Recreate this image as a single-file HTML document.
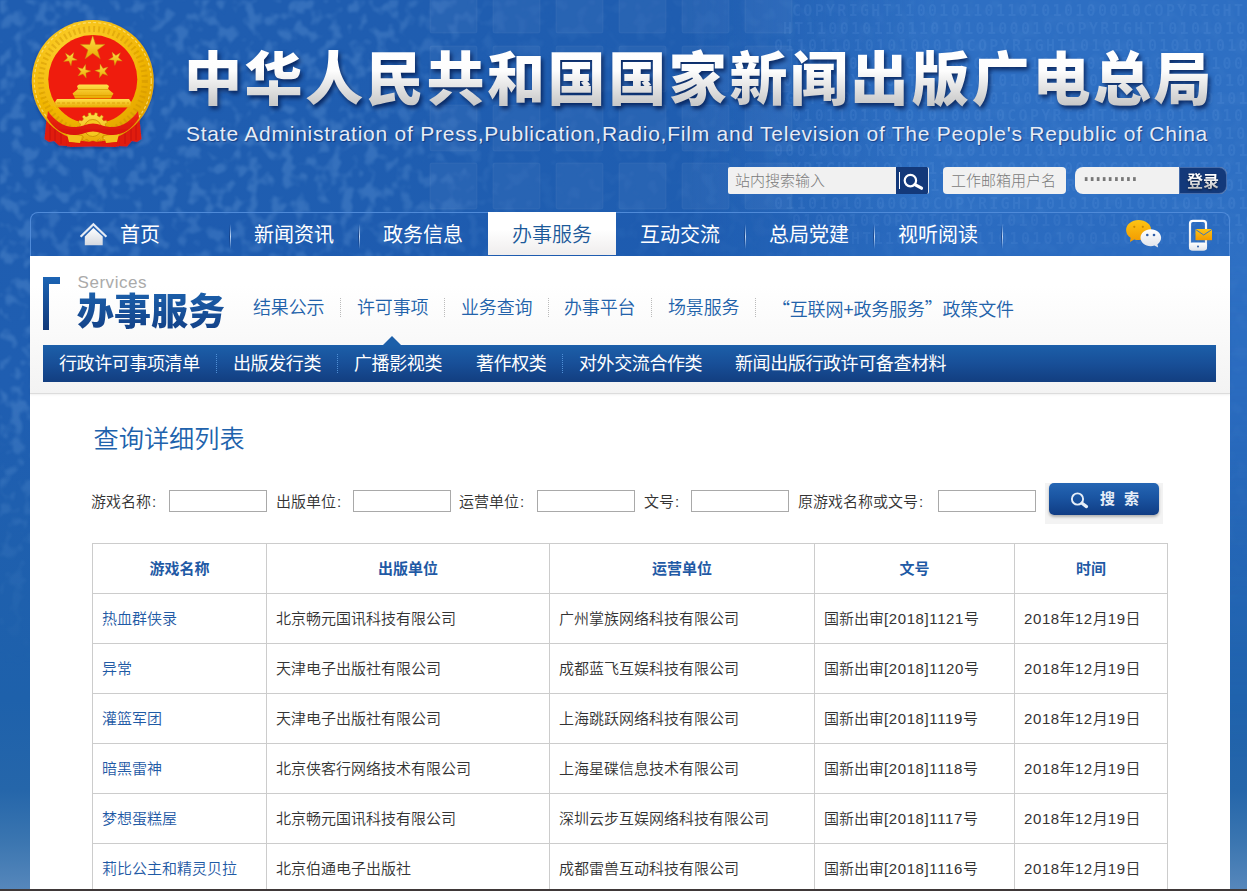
<!DOCTYPE html>
<html lang="zh-CN">
<head>
<meta charset="utf-8">
<title>查询详细列表 - 国家新闻出版广电总局</title>
<style>
*{box-sizing:border-box;margin:0;padding:0}
html,body{width:1247px;height:891px;overflow:hidden}
body{position:relative;font-family:"Liberation Sans","Noto Sans CJK SC DemiLight","Noto Sans CJK SC",sans-serif;background:#2062b6;color:#333}
.abs{position:absolute}
#bg{position:absolute;left:0;top:0;width:1247px;height:891px;background:linear-gradient(180deg,#1f5db0 0,#1f5eb1 400px,#1e61ab 700px,#2566aa 790px,#3a75b0 840px,#5687bb 889px)}
#bgr{position:absolute;left:0;top:0;width:1247px;height:891px;background:linear-gradient(90deg,rgba(70,135,215,0) 0,rgba(70,135,215,0) 55%,rgba(70,140,225,.4) 75%,rgba(70,140,225,.4) 100%);-webkit-mask-image:linear-gradient(180deg,#000 0,#000 260px,rgba(0,0,0,.35) 560px,transparent 760px);mask-image:linear-gradient(180deg,#000 0,#000 260px,rgba(0,0,0,.35) 560px,transparent 760px)}
#bottomline{position:absolute;left:0;top:889px;width:1247px;height:2px;background:#3f3838}
/* header */
#title{position:absolute;left:184px;top:33px;font-size:58px;font-weight:900;letter-spacing:2.6px;white-space:nowrap;color:#eee;line-height:84px;font-family:"Noto Sans CJK SC",sans-serif;
 background:linear-gradient(180deg,#fff 20%,#fdfdfd 45%,#c9c9c9 85%);-webkit-background-clip:text;background-clip:text;-webkit-text-fill-color:transparent;filter:drop-shadow(2px 3px 2px rgba(0,20,70,.75))}
#sub{position:absolute;left:186px;top:121px;font-size:21px;line-height:26px;color:#e6ecf6;white-space:nowrap;letter-spacing:.76px;text-shadow:1px 1px 1px rgba(0,20,80,.5)}
.inp{position:absolute;top:167px;height:27px;background:#f1f1f1;border-radius:4px;font-size:15px;line-height:27px;color:#7a7a7a;padding-left:8px;white-space:nowrap;letter-spacing:0;font-family:"Liberation Sans","Noto Sans CJK SC Light","Noto Sans CJK SC DemiLight","Noto Sans CJK SC",sans-serif;font-weight:300}
#pw{position:absolute;left:8.5px;top:-1.5px;font-family:"Liberation Sans",sans-serif;font-size:19px;font-weight:700;letter-spacing:-.3px;color:#777;line-height:27px;transform:scaleY(1.35);transform-origin:0 50%}
#lg{background:linear-gradient(180deg,#fff 25%,#c4c4c4 85%);-webkit-background-clip:text;background-clip:text;-webkit-text-fill-color:transparent;filter:drop-shadow(0 1px 1px rgba(0,0,0,.5))}
.btn{position:absolute;top:167px;height:27px;background:#13397a;color:#fff}
/* nav */
#nav{position:absolute;left:30px;top:212px;width:1200px;height:44px;background:rgba(25,85,170,.12);border:1px solid #4f8ad8;border-bottom:none;border-radius:8px 8px 0 0}
.ni{position:absolute;top:213px;height:44px;line-height:44px;font-size:20px;color:#fff;white-space:nowrap;font-family:"Liberation Sans","Noto Sans CJK SC",sans-serif}
.ns{position:absolute;top:224px;width:2px;height:25px;background:linear-gradient(180deg,rgba(10,40,100,0),rgba(10,40,100,.55) 50%,rgba(10,40,100,0)) left/1px 100% no-repeat,linear-gradient(180deg,rgba(200,222,250,0),rgba(200,222,250,.95) 50%,rgba(200,222,250,0)) right/1px 100% no-repeat}
#act{position:absolute;left:488px;top:212px;width:128px;height:43px;background:linear-gradient(180deg,#fff 0,#fff 40%,#efeded 100%)}
/* main */
#main{position:absolute;left:30px;top:256px;width:1200px;height:633px;background:#fff}
#sechead{position:absolute;left:30px;top:256px;width:1200px;height:138px;background:linear-gradient(180deg,#fff 0,#fff 30px,#f3f3f3 137px);border-bottom:1px solid #dcdcdc;box-shadow:0 1px 2px rgba(0,0,0,.06)}
#brk{position:absolute;left:43px;top:277px;width:17px;height:53px}
#svc{position:absolute;left:77.5px;top:272px;font-size:17px;line-height:22px;color:#aaa;letter-spacing:.55px}
#svct{position:absolute;left:77px;top:284.5px;font-size:37px;line-height:48px;font-weight:900;color:#1b4f96;white-space:nowrap;font-family:"Noto Sans CJK SC",sans-serif;
 background:linear-gradient(180deg,#1d64b0,#123f85);-webkit-background-clip:text;background-clip:text;-webkit-text-fill-color:transparent}
.sn{position:absolute;top:295px;font-size:18px;line-height:26px;color:#2262aa;white-space:nowrap;letter-spacing:-.15px}
.sd{position:absolute;top:298px;width:0;height:19px;border-left:1px dotted #bbb}
#bar{position:absolute;left:43px;top:345px;width:1173px;height:37px;background:linear-gradient(180deg,#1c5fa9 0,#184f98 50%,#123e80 100%)}
.bi{position:absolute;top:346px;font-size:18px;line-height:37px;color:#fff;white-space:nowrap;letter-spacing:-.4px;font-family:"Liberation Sans","Noto Sans CJK SC",sans-serif}
.bd{position:absolute;top:354px;width:0;height:19px;border-left:1px dotted #4f8fd6}
#tri{position:absolute;left:383px;top:336px;width:0;height:0;border-left:9.5px solid transparent;border-right:9.5px solid transparent;border-bottom:9.5px solid #1c5fa9}
#h1{position:absolute;left:93.5px;top:420.5px;font-size:25.2px;line-height:36px;color:#2062ac;font-weight:400;white-space:nowrap}
.fl{position:absolute;top:491px;font-size:15px;line-height:22px;color:#333;white-space:nowrap}
.fl i{font-style:normal;margin-left:1px}
.fi{position:absolute;top:490px;width:98px;height:22px;border:1px solid #a9a9a9;background:#fff}
#sbg{position:absolute;left:1045px;top:483px;width:118px;height:41px;background:#f3f3f3}
#sbtn{position:absolute;left:1049px;top:483px;width:110px;height:32px;border-radius:5px;background:linear-gradient(180deg,#2566b4 0,#1a55a2 45%,#103c84 100%);color:#e6eef8;font-size:15px;font-weight:700;line-height:32px;white-space:nowrap;box-shadow:0 2px 3px rgba(0,0,0,.28);font-family:"Liberation Sans","Noto Sans CJK SC",sans-serif}
table{position:absolute;left:92px;top:543px;border-collapse:collapse;table-layout:fixed;width:1075px;font-size:15px}
td,th{border:1px solid #ccc;height:50px;padding:0 0 2px 9px;text-align:left;font-weight:400;color:#333;white-space:nowrap;overflow:hidden}
th{text-align:center;padding:0 0 2px 0;font-weight:700;font-family:"Liberation Sans","Noto Sans CJK SC",sans-serif;color:#1f5aa5}
td.a{color:#1f5aa5}
.n{letter-spacing:.6px}
.q{font-family:"Noto Sans CJK SC DemiLight","Noto Sans CJK SC",sans-serif}
</style>
</head>
<body>
<div id="bg"></div><div id="bgr"></div>
<svg id="tex" style="position:absolute;left:0;top:0" width="1247" height="891" viewBox="0 0 1247 891">
<defs>
<filter id="nz" x="0" y="0" width="100%" height="100%"><feTurbulence type="fractalNoise" baseFrequency="0.085 0.075" numOctaves="2" seed="11"/><feColorMatrix type="matrix" values="0 0 0 0 .38  0 0 0 0 .64  0 0 0 0 .96  5 0 0 0 -2.4"/><feGaussianBlur stdDeviation=".9"/></filter>
<linearGradient id="fadeL" x1="0" y1="0" x2="1" y2="0"><stop offset="0" stop-color="#fff" stop-opacity="1"/><stop offset=".3" stop-color="#fff" stop-opacity="1"/><stop offset=".42" stop-color="#fff" stop-opacity=".25"/><stop offset="1" stop-color="#fff" stop-opacity=".2"/></linearGradient>
<linearGradient id="fadeV" x1="0" y1="0" x2="0" y2="1"><stop offset="0" stop-color="#fff"/><stop offset=".45" stop-color="#fff"/><stop offset=".75" stop-color="#000"/></linearGradient>
<mask id="mk"><rect width="1247" height="891" fill="url(#fadeL)"/></mask>
<mask id="mv"><rect width="1247" height="891" fill="url(#fadeV)"/></mask>
</defs>
<g mask="url(#mv)"><g mask="url(#mk)"><rect width="1247" height="891" filter="url(#nz)" opacity=".17"/></g></g>
<g fill="#fff" fill-opacity=".045" stroke="#fff" stroke-opacity=".05" stroke-width="1"><rect x="430" y="-13" width="47" height="46" rx="2"/><rect x="493" y="-13" width="47" height="46" rx="2"/><rect x="556" y="-13" width="47" height="46" rx="2"/><rect x="619" y="-13" width="47" height="46" rx="2"/><rect x="682" y="-13" width="47" height="46" rx="2"/><rect x="745" y="-13" width="47" height="46" rx="2"/><rect x="430" y="46" width="47" height="46" rx="2"/><rect x="493" y="46" width="47" height="46" rx="2"/><rect x="556" y="46" width="47" height="46" rx="2"/><rect x="619" y="46" width="47" height="46" rx="2"/><rect x="682" y="46" width="47" height="46" rx="2"/><rect x="745" y="46" width="47" height="46" rx="2"/><rect x="430" y="105" width="47" height="46" rx="2"/><rect x="493" y="105" width="47" height="46" rx="2"/><rect x="556" y="105" width="47" height="46" rx="2"/><rect x="619" y="105" width="47" height="46" rx="2"/><rect x="682" y="105" width="47" height="46" rx="2"/><rect x="745" y="105" width="47" height="46" rx="2"/><rect x="430" y="163" width="47" height="46" rx="2"/><rect x="493" y="163" width="47" height="46" rx="2"/><rect x="556" y="163" width="47" height="46" rx="2"/><rect x="619" y="163" width="47" height="46" rx="2"/><rect x="682" y="163" width="47" height="46" rx="2"/><rect x="745" y="163" width="47" height="46" rx="2"/></g>
<g font-family="'DejaVu Sans Mono','Liberation Mono',monospace" font-size="15" font-weight="bold" letter-spacing="2.3" fill="#9cc4ff" fill-opacity=".09" style="filter:blur(.5px)"><text x="792" y="16">COPYRIGHT1100101101101010100010COPYRIGHT101010</text><text x="783" y="33.5">HT1100101101101010100010COPYRIGHT1010101010101</text><text x="774" y="51.0">01101101010100010COPYRIGHT10101010101010101010</text><text x="792" y="68.5">1010100010COPYRIGHT101010101010101010100101010</text><text x="783" y="86.0">010COPYRIGHT1010101010101010101001010101010101</text><text x="774" y="103.5">IGHT1100101101101010100010COPYRIGHT10101010101</text><text x="792" y="121.0">0101101101010100010COPYRIGHT101010101010101010</text><text x="783" y="138.5">101010100010COPYRIGHT1010101010101010101001010</text><text x="774" y="156.0">00010COPYRIGHT10101010101010101010010101010101</text><text x="792" y="173.5">YRIGHT1100101101101010100010COPYRIGHT101010101</text><text x="783" y="191.0">100101101101010100010COPYRIGHT1010101010101010</text><text x="774" y="208.5">01101010100010COPYRIGHT10101010101010101010010</text><text x="792" y="226.0">0100010COPYRIGHT101010101010101010100101010101</text><text x="783" y="243.5">OPYRIGHT1100101101101010100010COPYRIGHT1010101</text></g>
</svg>
<svg id="emblem" style="position:absolute;left:20px;top:10px" width="150" height="150" viewBox="0 0 150 150">
<defs>
<radialGradient id="gld" cx="0.4" cy="0.3" r="0.8"><stop offset="0" stop-color="#ffd83a"/><stop offset="0.6" stop-color="#f2b705"/><stop offset="1" stop-color="#d99a00"/></radialGradient>
<linearGradient id="gl2" x1="0" y1="0" x2="0" y2="1"><stop offset="0" stop-color="#ffe04a"/><stop offset="1" stop-color="#e8a800"/></linearGradient>
<linearGradient id="rib" x1="0" y1="0" x2="0" y2="1"><stop offset="0" stop-color="#f02a14"/><stop offset="1" stop-color="#d81408"/></linearGradient>
<filter id="esh" x="-10%" y="-10%" width="120%" height="125%"><feDropShadow dx="0" dy="1.5" stdDeviation="1.5" flood-color="#0a2a66" flood-opacity=".55"/></filter>
</defs>
<g filter="url(#esh)">
<path d="M27,104 L24.5,129 L29,132 L34,131 L39,135.5 L47,136 L48,116 Z" fill="#e01a0c"/>
<path d="M119,104 L121.5,129 L117,132 L112,131 L107,136.5 L99,136 L98,116 Z" fill="#e01a0c"/>
<path d="M46,112 L100,112 L99,136.5 L47,136.5 Z" fill="#e01a0c"/>
<path d="M30,112 L30,130 M35,116 L35,131 M41,119 L41,134 M116,112 L116,130 M111,116 L111,131 M105,119 L105,134" stroke="#b80f06" stroke-width="1" fill="none" opacity=".6"/>
<circle cx="72.8" cy="71" r="61" fill="url(#gld)"/>
<circle cx="72.8" cy="71" r="58.5" fill="none" stroke="#fbe27a" stroke-width="1.2" stroke-dasharray="3 2.2" opacity=".8"/>
<circle cx="72.8" cy="71" r="52" fill="none" stroke="#c98c00" stroke-width="6" stroke-dasharray="2 3" opacity=".4"/>
<circle cx="72.8" cy="69.5" r="44.5" fill="#ef1c0c"/>
<polygon points="72.7,25.6 75.6,34.4 84.9,34.4 77.4,39.9 80.2,48.8 72.7,43.3 65.2,48.8 68.0,39.9 60.5,34.4 69.8,34.4" fill="url(#gl2)" stroke="#c8860a" stroke-width=".5"/>
<polygon points="53.8,42.4 52.7,47.5 57.2,50.1 52.0,50.6 51.0,55.8 48.8,51.0 43.6,51.5 47.5,48.0 45.4,43.2 49.9,45.9" fill="url(#gl2)" stroke="#c8860a" stroke-width=".4"/>
<polygon points="92.0,42.0 95.9,45.5 100.4,42.8 98.3,47.6 102.2,51.1 97.0,50.6 94.8,55.4 93.8,50.2 88.6,49.7 93.1,47.1" fill="url(#gl2)" stroke="#c8860a" stroke-width=".4"/>
<polygon points="65.5,54.4 65.7,59.7 70.8,61.0 65.9,62.9 66.2,68.1 62.9,64.1 58.0,65.9 60.9,61.5 57.6,57.5 62.6,58.8" fill="url(#gl2)" stroke="#c8860a" stroke-width=".4"/>
<polygon points="80.1,54.0 83.0,58.4 88.0,57.1 84.7,61.1 87.6,65.5 82.7,63.7 79.4,67.7 79.7,62.5 74.8,60.6 79.9,59.3" fill="url(#gl2)" stroke="#c8860a" stroke-width=".4"/>
<path d="M57,76 L59,74.5 L87,74.5 L89,76 L88,79 L93.5,83.5 L92,86 L91,88.5 L55,88.5 L54,86 L52.5,83.5 L58,79 Z" fill="url(#gl2)"/>
<path d="M37,89 L109,89 L111,92 L110,97.5 L36,97.5 L35,92 Z" fill="url(#gl2)"/>
<path d="M54,85.5 L92,85.5" stroke="#d99a00" stroke-width=".8" fill="none"/>
<path d="M58,79.5 L88,79.5" stroke="#d99a00" stroke-width=".8" fill="none"/>
<path d="M37,93 L109,93" stroke="#d99a00" stroke-width=".8" stroke-dasharray="3 2" fill="none"/>
<polygon points="85.7,116.4 88.2,116.7 88.2,119.3 85.7,119.6 85.1,122.1 87.3,123.6 86.2,125.8 83.7,125.1 82.1,127.1 83.4,129.3 81.5,130.9 79.6,129.1 77.3,130.2 77.5,132.8 75.0,133.3 74.1,130.9 71.5,130.9 70.6,133.3 68.1,132.8 68.3,130.2 66.0,129.1 64.1,130.9 62.2,129.3 63.5,127.1 61.9,125.1 59.4,125.8 58.3,123.6 60.5,122.1 59.9,119.6 57.4,119.3 57.4,116.7 59.9,116.4 60.5,113.9 58.3,112.4 59.4,110.2 61.9,110.9 63.5,108.9 62.2,106.7 64.1,105.1 66.0,106.9 68.3,105.8 68.1,103.2 70.6,102.7 71.5,105.1 74.1,105.1 75.0,102.7 77.5,103.2 77.3,105.8 79.6,106.9 81.5,105.1 83.4,106.7 82.1,108.9 83.7,110.9 86.2,110.2 87.3,112.4 85.1,113.9" fill="url(#gl2)" stroke="#c08000" stroke-width=".5"/>
<circle cx="72.8" cy="118" r="8.5" fill="#f6c820" stroke="#c98c00" stroke-width=".8"/>
<path d="M47,124 L62,126 L60,133 L49,132 Z M99,124 L84,126 L86,133 L97,132 Z" fill="#f4c21a"/>
<path d="M28,101 C34,110 44,118 56,117 C63,116.5 67,113.5 73,113.5 C79,113.500 83,116.500 90,117 C102,118 112,110 118,101 L119,108 C112,119 102,126 90,125 C83,124.500 79,121.500 73,121.500 C67,121.500 63,124.500 56,125 C44,126 34,119 27,108 Z" fill="url(#rib)"/>
<path d="M48,132 L60,133.500 L72.800,131 L86,133.500 L98,132 L96,137 L72.800,136 L50,137 Z" fill="#e01a0c"/>
</g>
</svg>
<div id="title">中华人民共和国国家新闻出版广电总局</div>
<div id="sub">State Administration of Press,Publication,Radio,Film and Television of The People's Republic of China</div>

<div class="inp" style="left:728px;width:168px;border-radius:2px 0 0 2px;padding-left:7px">站内搜索输入</div>
<div class="btn" style="left:896px;width:33px;border-right:1px solid #dfe6f0;border-radius:0 2px 2px 0"><svg width="33" height="27" viewBox="0 0 33 27" style="display:block"><line x1="3.5" y1="5" x2="3.5" y2="22" stroke="#fff" stroke-width="1"/><circle cx="14.4" cy="13.6" r="5.7" fill="none" stroke="#fff" stroke-width="2.2"/><line x1="19" y1="17.6" x2="25.500" y2="21.200" stroke="#fff" stroke-width="3.2" stroke-linecap="round"/></svg></div>
<div class="inp" style="left:943px;width:123px">工作邮箱用户名</div>
<div class="inp" style="left:1075px;width:152px;border-radius:8px"><span id="pw">·········</span></div>
<div class="btn" style="left:1179px;width:48px;border-radius:0 8px 8px 0;font-size:16px;font-weight:700;line-height:29px;text-align:center;font-family:'Liberation Sans','Noto Sans CJK SC',sans-serif;box-shadow:inset 0 0 0 1px rgba(110,150,210,.55)"><span id="lg">登录</span></div>

<div id="nav"></div>
<div id="act"></div>
<svg style="position:absolute;left:78px;top:220px" width="32" height="28" viewBox="0 0 32 28">
<defs><linearGradient id="hg" x1="0" y1="0" x2="0" y2="1"><stop offset="0" stop-color="#ffffff"/><stop offset="1" stop-color="#d4d8e0"/></linearGradient></defs>
<path d="M2.6,16.8 L15.4,4.2 L28.4,16.8" fill="none" stroke="#e6ebf4" stroke-width="2.2" stroke-linejoin="miter"/>
<path d="M6.8,16.6 L15.4,8 L24.7,16.600 L24.7,25.3 L6.8,25.3 Z" fill="url(#hg)"/>
</svg>
<div class="ni" style="left:120px">首页</div>
<div class="ni" style="left:254px">新闻资讯</div>
<div class="ni" style="left:383px">政务信息</div>
<div class="ni" style="left:512px;color:#1c5a9a;font-family:'Liberation Sans','Noto Sans CJK SC DemiLight','Noto Sans CJK SC',sans-serif">办事服务</div>
<div class="ni" style="left:640px">互动交流</div>
<div class="ni" style="left:769px">总局党建</div>
<div class="ni" style="left:898px">视听阅读</div>
<div class="ns" style="left:229px"></div>
<div class="ns" style="left:358px"></div>
<div class="ns" style="left:744px"></div>
<div class="ns" style="left:873px"></div>
<div class="ns" style="left:1001px"></div>

<svg style="position:absolute;left:1120px;top:216px" width="100" height="38" viewBox="0 0 100 38">
<defs>
<linearGradient id="og" x1="0" y1="0" x2="0" y2="1"><stop offset="0" stop-color="#fdc414"/><stop offset="1" stop-color="#f29a00"/></linearGradient>
<linearGradient id="wg" x1="0" y1="0" x2="0" y2="1"><stop offset="0" stop-color="#ffffff"/><stop offset="1" stop-color="#dfe3ea"/></linearGradient>
</defs>
<path d="M18.6,4 C25.6,4 31.2,8.4 31.2,14 C31.2,19.6 25.6,24 18.6,24 C17,24 15.6,23.8 14.2,23.4 L10,26 L10.6,21.8 C7.8,20 6.1,17.2 6.1,14 C6.1,8.4 11.7,4 18.6,4 Z" fill="url(#og)"/>
<circle cx="14.3" cy="10.8" r="1.1" fill="#c98a00"/><circle cx="22.8" cy="10.8" r="1.1" fill="#c98a00"/>
<path d="M30.8,13.2 C36.5,13.2 41.1,17 41.1,21.7 C41.1,24.3 39.7,26.6 37.5,28.2 L38.1,31.6 L34.4,29.6 C33.300,30 32.100,30.200 30.800,30.200 C25.100,30.200 20.500,26.400 20.500,21.700 C20.500,17 25.100,13.200 30.800,13.200 Z" fill="url(#wg)"/>
<circle cx="27.3" cy="19" r="1.3" fill="#2f5ea8"/><circle cx="34" cy="19" r="1.3" fill="#2f5ea8"/>
<rect x="70" y="4.800" width="16" height="28.600" rx="3" fill="none" stroke="url(#wg)" stroke-width="2.200"/>
<rect x="69" y="26.500" width="18" height="8" rx="3" fill="url(#wg)"/>
<circle cx="78" cy="30.400" r="1" fill="#2f5ea8"/>
<rect x="75.500" y="13" width="16.500" height="11.200" fill="url(#og)"/>
<path d="M75.500,13.400 L83.700,19 L92,13.400" fill="none" stroke="#3a74c4" stroke-width="1"/>
</svg>
<div id="main"></div>
<div id="sechead"></div>
<div id="brk"><svg width="17" height="53" viewBox="0 0 17 53" style="display:block"><defs><linearGradient id="bg1" x1="0" y1="0" x2="0" y2="1"><stop offset="0" stop-color="#1c64b4"/><stop offset="1" stop-color="#11397a"/></linearGradient></defs><path d="M0,0 H17 V7 H6 V53 H0 Z" fill="url(#bg1)"/></svg></div>
<div id="svc">Services</div>
<div id="svct">办事服务</div>
<div class="sn" style="left:253px">结果公示</div>
<div class="sn" style="left:357px">许可事项</div>
<div class="sn" style="left:461px">业务查询</div>
<div class="sn" style="left:564px">办事平台</div>
<div class="sn" style="left:668px">场景服务</div>
<div class="sn" style="left:772px;letter-spacing:-.2px"><span class="q">“</span>互联网+政务服务<span class="q">”</span>政策文件</div>
<div class="sd" style="left:340px"></div>
<div class="sd" style="left:444px"></div>
<div class="sd" style="left:548px"></div>
<div class="sd" style="left:651px"></div>
<div class="sd" style="left:755px"></div>
<div id="tri"></div>
<div id="bar"></div>
<div class="bi" style="left:59px">行政许可事项清单</div>
<div class="bi" style="left:233px">出版发行类</div>
<div class="bi" style="left:354px">广播影视类</div>
<div class="bi" style="left:476px">著作权类</div>
<div class="bi" style="left:579px">对外交流合作类</div>
<div class="bi" style="left:735px">新闻出版行政许可备查材料</div>
<div class="bd" style="left:216px"></div>
<div class="bd" style="left:337px"></div>
<div class="bd" style="left:562px"></div>

<h1 id="h1">查询详细列表</h1>
<div class="fl" style="left:91px">游戏名称<i>:</i></div><div class="fi" style="left:169px"></div>
<div class="fl" style="left:276px">出版单位<i>:</i></div><div class="fi" style="left:353px"></div>
<div class="fl" style="left:459px">运营单位<i>:</i></div><div class="fi" style="left:537px"></div>
<div class="fl" style="left:644px">文号<i>:</i></div><div class="fi" style="left:691px"></div>
<div class="fl" style="left:798px">原游戏名称或文号<i>:</i></div><div class="fi" style="left:938px"></div>
<div id="sbg"></div><div id="sbtn"><svg width="24" height="24" viewBox="0 0 24 24" style="position:absolute;left:17px;top:4px"><circle cx="11.5" cy="12" r="5.6" fill="none" stroke="#e6eef8" stroke-width="1.9"/><line x1="16" y1="16.2" x2="20.500" y2="19.600" stroke="#e6eef8" stroke-width="3.2" stroke-linecap="round"/></svg><span style="position:absolute;left:51px;top:0;letter-spacing:9px">搜索</span></div>

<table>
<colgroup><col style="width:174px"><col style="width:283px"><col style="width:265px"><col style="width:200px"><col style="width:153px"></colgroup>
<tr><th>游戏名称</th><th>出版单位</th><th>运营单位</th><th>文号</th><th>时间</th></tr>
<tr><td class="a">热血群侠录</td><td>北京畅元国讯科技有限公司</td><td>广州掌族网络科技有限公司</td><td>国新出审<span class="n">[2018]1121</span>号</td><td><span class="n">2018</span>年<span class="n">12</span>月<span class="n">19</span>日</td></tr>
<tr><td class="a">异常</td><td>天津电子出版社有限公司</td><td>成都蓝飞互娱科技有限公司</td><td>国新出审<span class="n">[2018]1120</span>号</td><td><span class="n">2018</span>年<span class="n">12</span>月<span class="n">19</span>日</td></tr>
<tr><td class="a">灌篮军团</td><td>天津电子出版社有限公司</td><td>上海跳跃网络科技有限公司</td><td>国新出审<span class="n">[2018]1119</span>号</td><td><span class="n">2018</span>年<span class="n">12</span>月<span class="n">19</span>日</td></tr>
<tr><td class="a">暗黑雷神</td><td>北京侠客行网络技术有限公司</td><td>上海星碟信息技术有限公司</td><td>国新出审<span class="n">[2018]1118</span>号</td><td><span class="n">2018</span>年<span class="n">12</span>月<span class="n">19</span>日</td></tr>
<tr><td class="a">梦想蛋糕屋</td><td>北京畅元国讯科技有限公司</td><td>深圳云步互娱网络科技有限公司</td><td>国新出审<span class="n">[2018]1117</span>号</td><td><span class="n">2018</span>年<span class="n">12</span>月<span class="n">19</span>日</td></tr>
<tr><td class="a">莉比公主和精灵贝拉</td><td>北京伯通电子出版社</td><td>成都雷兽互动科技有限公司</td><td>国新出审<span class="n">[2018]1116</span>号</td><td><span class="n">2018</span>年<span class="n">12</span>月<span class="n">19</span>日</td></tr>
<tr><td class="a">&nbsp;</td><td></td><td></td><td></td><td></td></tr>
</table>
<div id="bottomline"></div>
</body>
</html>
